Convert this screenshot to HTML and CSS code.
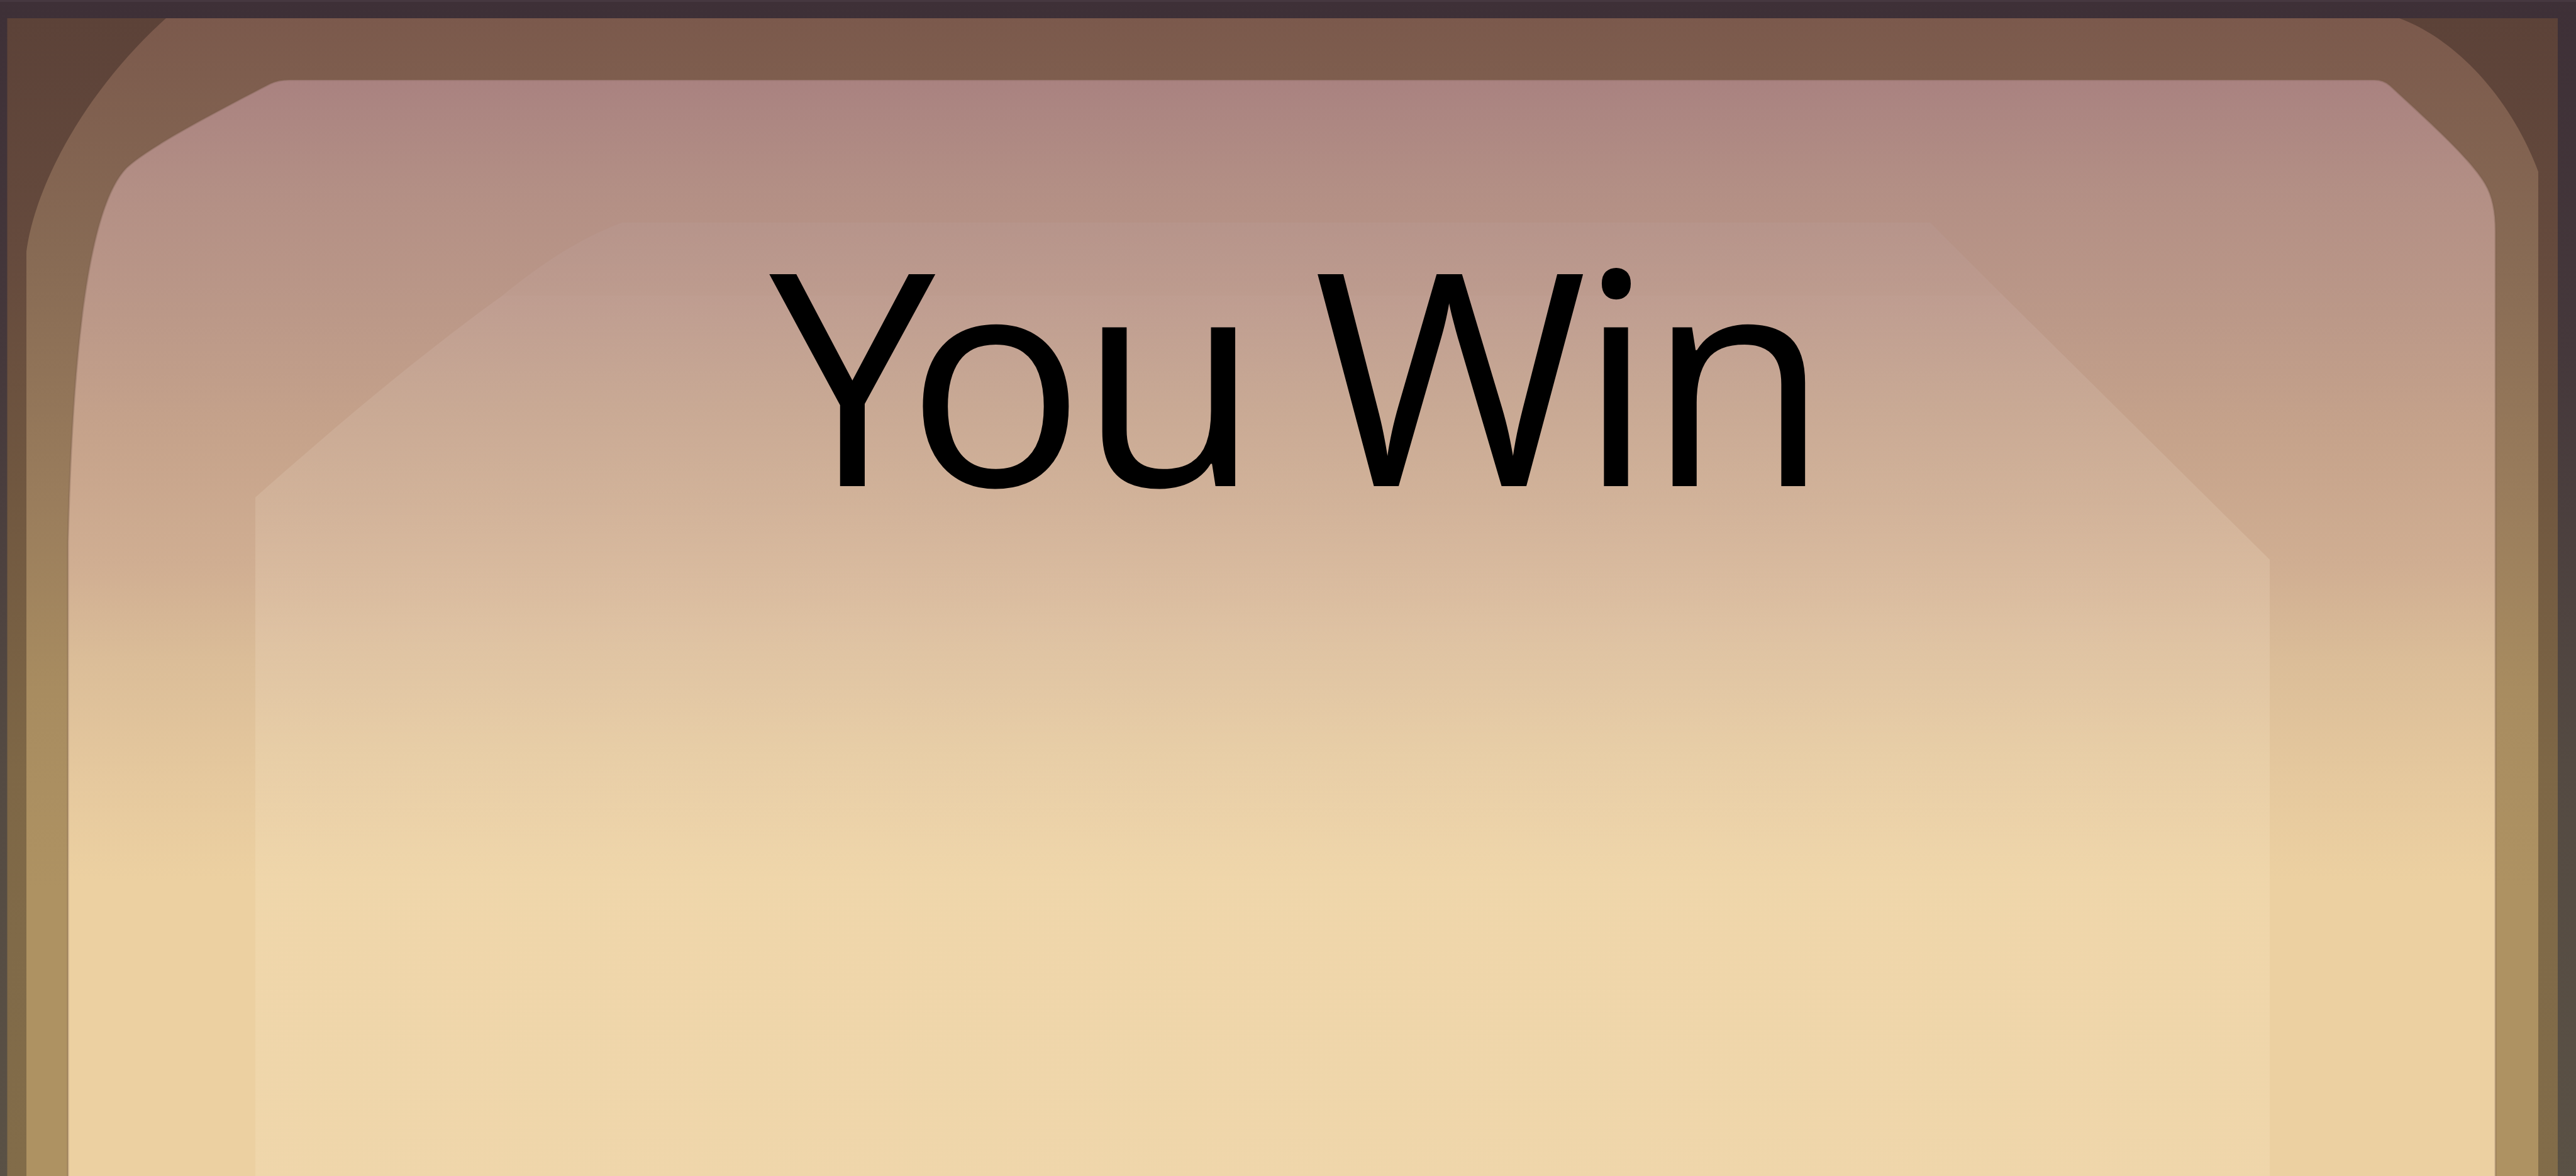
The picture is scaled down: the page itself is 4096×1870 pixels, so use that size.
FILE: index.html
```html
<!DOCTYPE html>
<html lang="en">
<head>
<meta charset="utf-8">
<title>You Win</title>
<link rel="stylesheet" href="styles.css">
</head>
<body>
<main class="stage">
  <svg class="art" viewBox="0 0 4096 1870" preserveAspectRatio="none" aria-hidden="true">
    <defs>
      <linearGradient id="gFrame" gradientUnits="userSpaceOnUse" x1="0" y1="0" x2="0" y2="1870">
        <stop offset="0" stop-color="#3e3037"/>
        <stop offset="0.3" stop-color="#45383b"/>
        <stop offset="0.65" stop-color="#544a42"/>
        <stop offset="1" stop-color="#5a5145"/>
      </linearGradient>
      <linearGradient id="gCorner" gradientUnits="userSpaceOnUse" x1="0" y1="29" x2="0" y2="1870">
        <stop offset="0" stop-color="#5c4238"/>
        <stop offset="0.2" stop-color="#654a3d"/>
        <stop offset="0.42" stop-color="#715840"/>
        <stop offset="0.65" stop-color="#7e6746"/>
        <stop offset="0.8" stop-color="#806a48"/>
        <stop offset="1" stop-color="#826c49"/>
      </linearGradient>
      <linearGradient id="gBand" gradientUnits="userSpaceOnUse" x1="0" y1="29" x2="0" y2="1870">
        <stop offset="0" stop-color="#7b594c"/>
        <stop offset="0.2" stop-color="#876a54"/>
        <stop offset="0.42" stop-color="#9a7d5c"/>
        <stop offset="0.58" stop-color="#a88c60"/>
        <stop offset="0.75" stop-color="#ae9262"/>
        <stop offset="1" stop-color="#ae9262"/>
      </linearGradient>
      <linearGradient id="gPanel" gradientUnits="userSpaceOnUse" x1="0" y1="127" x2="0" y2="1870">
        <stop offset="0" stop-color="#a98280"/>
        <stop offset="0.1" stop-color="#b38f85"/>
        <stop offset="0.213" stop-color="#bb9888"/>
        <stop offset="0.328" stop-color="#c6a38b"/>
        <stop offset="0.443" stop-color="#d0ae92"/>
        <stop offset="0.53" stop-color="#dbbd98"/>
        <stop offset="0.644" stop-color="#e6c99e"/>
        <stop offset="0.73" stop-color="#ecd0a1"/>
        <stop offset="1" stop-color="#ecd0a1"/>
      </linearGradient>
      <linearGradient id="gInner" gradientUnits="userSpaceOnUse" x1="0" y1="354" x2="0" y2="1870">
        <stop offset="0" stop-color="#b7968e"/>
        <stop offset="0.096" stop-color="#c2a194"/>
        <stop offset="0.195" stop-color="#cbac98"/>
        <stop offset="0.294" stop-color="#d4b69d"/>
        <stop offset="0.426" stop-color="#e0c4a6"/>
        <stop offset="0.558" stop-color="#e9d0aa"/>
        <stop offset="0.69" stop-color="#f0d8ad"/>
        <stop offset="1" stop-color="#f0d8ad"/>
      </linearGradient>
    </defs>

    <rect x="0" y="0" width="4096" height="1870" fill="url(#gFrame)"/>
    <rect x="0" y="0" width="4096" height="3" fill="#463840"/>
    <rect x="11.5" y="29" width="4055.5" height="1841" fill="url(#gCorner)"/>

    <path fill="url(#gBand)" d="M42 1870 L42 400 C55 300 130 150 264 29 L3815 29 C3900 60 3990 150 4036 273 L4036 1870 Z"/>

    <path fill="url(#gPanel)" stroke="#7a5f4c" stroke-opacity="0.35" stroke-width="3"
      d="M108 1872 L108 862 C115 560 140 330 201 267 C230 240 300 200 430 133 Q442 127 460 127 L3775 127 Q3790 127 3800 136 C3870 200 3930 255 3952 293 Q3968 320 3968 367 L3968 1872 Z"/>

    <path fill="url(#gInner)" opacity="0.6"
      d="M406 1872 L406 791 C520 690 660 570 799 470 C860 420 920 380 989 354 L3069 354 L3180 465 L3609 890 L3609 1872 Z"/>
    <path fill="url(#gInner)" opacity="0.4"
      d="M799 470 L3180 470 L3180 465 L3609 890 L3609 1872 L406 1872 L406 791 C520 690 660 570 799 470 Z"/>
  </svg>

  <h1 class="title"><span class="kern-y">Y</span>ou <span class="kern-w">W</span>in</h1>
</main>
</body>
</html>
```

FILE: styles.css
```css
html, body {
  margin: 0;
  padding: 0;
  background: #3e3037;
}

.stage {
  display: grid;
  width: 4096px;
  height: 1870px;
  overflow: hidden;
}

.art {
  grid-area: 1 / 1;
  display: block;
  width: 100%;
  height: 100%;
}

.title {
  grid-area: 1 / 1;
  align-self: start;
  justify-self: center;
  margin: 0 0 0 26px;
  padding-top: 354px;
  font-family: "Open Sans", "Liberation Sans", sans-serif;
  font-weight: 400;
  font-size: 472px;
  line-height: 1;
  color: #000;
  white-space: nowrap;
  letter-spacing: -10px;
  word-spacing: -19px;
}

.kern-y {
  letter-spacing: -46px;
}

.kern-w {
  letter-spacing: -14px;
}
```
